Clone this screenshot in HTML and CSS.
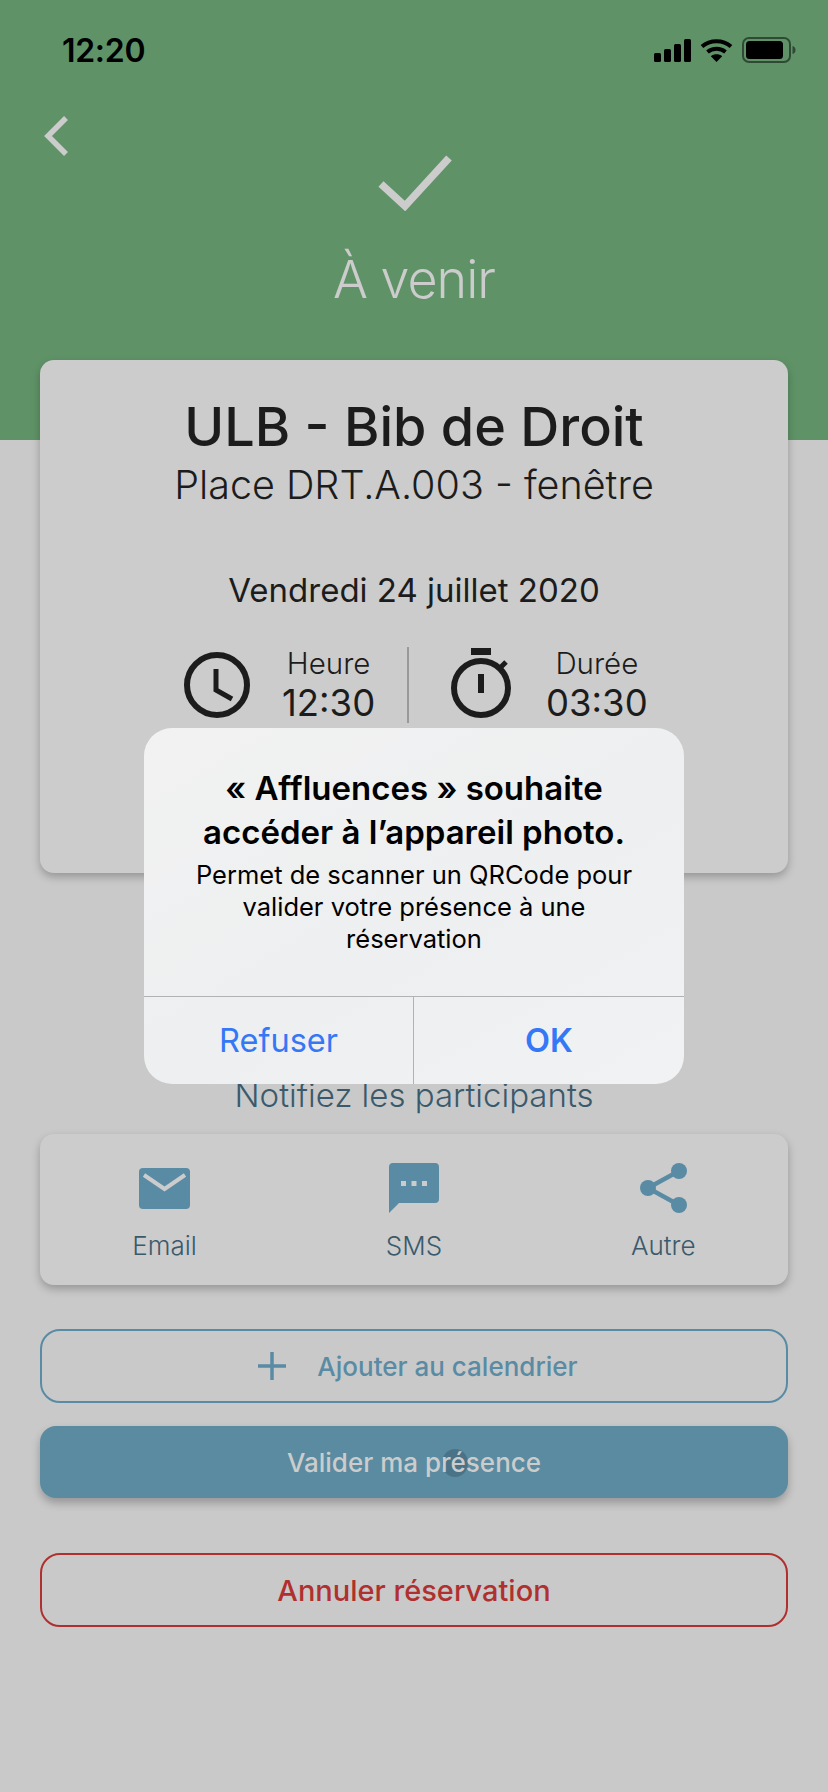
FILE: index.html
```html
<!DOCTYPE html>
<html lang="fr">
<head>
    <meta charset="utf-8">
    <title>Réservation</title>
    <link rel="stylesheet" href="styles.css">
</head>
<body>
<div class="page">
    <header class="hero">
        <div class="status-bar">
            <span class="time">12:20</span>
            <div class="status-icons">
                <svg class="signal" width="37" height="23" viewBox="0 0 37 23"><rect x="0" y="14" width="7" height="9" rx="1.5"/><rect x="10" y="10" width="7" height="13" rx="1.5"/><rect x="20" y="5" width="7" height="18" rx="1.5"/><rect x="30" y="0" width="7" height="23" rx="1.5"/></svg>
                <svg class="wifi" width="33" height="24" viewBox="0 0 33 24"><path d="M2 8.5C10 1.5 23 1.5 31 8.5M7.5 14C12.5 9.7 20.5 9.7 25.5 14" fill="none" stroke="#000" stroke-width="4"/><path d="M16.5 24L10.8 18.2C14 15.6 19 15.6 22.2 18.2Z"/></svg>
                <svg class="battery" width="54" height="26" viewBox="0 0 54 26"><rect x="1" y="1" width="47" height="24" rx="6" fill="none" stroke="#2f4a34" stroke-width="2"/><rect x="4" y="4" width="37" height="18" rx="3.5"/><path d="M50.5 9C52.5 9.6 53.5 11 53.5 13S52.5 16.4 50.5 17Z" fill="#2f4a34"/></svg>
            </div>
        </div>
        <svg class="back" width="26" height="40" viewBox="0 0 26 40"><path d="M23 2L5 20L23 38" fill="none" stroke="#cccccc" stroke-width="5.5"/></svg>
        <svg class="check" width="74" height="56" viewBox="0 0 74 56"><path d="M3 29L27 51L71 3" fill="none" stroke="#cccccc" stroke-width="7.5"/></svg>
        <h1 class="hero-title">À venir</h1>
    </header>

    <main class="content">
        <section class="card booking">
            <h2 class="place">ULB - Bib de Droit</h2>
            <p class="seat">Place DRT.A.003 - fenêtre</p>
            <p class="date">Vendredi 24 juillet 2020</p>
            <div class="slots">
                <div class="slot slot-left">
                    <svg width="66" height="66" viewBox="0 0 66 66"><circle cx="33" cy="33" r="30" fill="none" stroke="#1c1c1c" stroke-width="6"/><path d="M32 17V38L48 47" fill="none" stroke="#1c1c1c" stroke-width="5"/></svg>
                    <div class="slot-text">
                        <span class="slot-label">Heure</span>
                        <span class="slot-value">12:30</span>
                    </div>
                </div>
                <div class="slot slot-right">
                    <svg width="60" height="70" viewBox="0 0 60 70"><rect x="20" y="0" width="20" height="7" fill="#1c1c1c"/><circle cx="30" cy="40" r="27" fill="none" stroke="#1c1c1c" stroke-width="6"/><path d="M49 20L55 14" fill="none" stroke="#1c1c1c" stroke-width="5"/><rect x="27" y="26" width="6" height="19" fill="#1c1c1c"/></svg>
                    <div class="slot-text">
                        <span class="slot-label">Durée</span>
                        <span class="slot-value">03:30</span>
                    </div>
                </div>
            </div>
        </section>

        <p class="notify-title">Notifiez les participants</p>
        <section class="card share">
            <div class="share-item">
                <div class="share-icon">
                    <svg width="51" height="41" viewBox="0 0 51 41"><rect width="51" height="41" rx="4" fill="#5a8ba4"/><path d="M5 7L25.5 21L46 7" fill="none" stroke="#cccccc" stroke-width="4"/></svg>
                </div>
                <span>Email</span>
            </div>
            <div class="share-item">
                <div class="share-icon">
                    <svg width="50" height="50" viewBox="0 0 50 50"><path d="M4 0H46A4 4 0 0 1 50 4V36A4 4 0 0 1 46 40H10L0 50V4A4 4 0 0 1 4 0Z" fill="#5a8ba4"/><rect x="12" y="18" width="5" height="5" fill="#cccccc"/><rect x="22.5" y="18" width="5" height="5" fill="#cccccc"/><rect x="33" y="18" width="5" height="5" fill="#cccccc"/></svg>
                </div>
                <span>SMS</span>
            </div>
            <div class="share-item">
                <div class="share-icon">
                    <svg width="47" height="50" viewBox="0 0 47 50"><path d="M39 8L8 25L39 42" fill="none" stroke="#5a8ba4" stroke-width="4.5"/><circle cx="39" cy="8" r="8" fill="#5a8ba4"/><circle cx="8" cy="25" r="8" fill="#5a8ba4"/><circle cx="39" cy="42" r="8" fill="#5a8ba4"/></svg>
                </div>
                <span>Autre</span>
            </div>
        </section>

        <button class="btn btn-outline">
            <svg width="28" height="28" viewBox="0 0 28 28"><path d="M14 0V28M0 14H28" stroke="#5a8ba4" stroke-width="3.5"/></svg>
            <span>Ajouter au calendrier</span>
        </button>
        <button class="btn btn-primary">
            <span class="spinner"></span>
            <span class="btn-label">Valider ma présence</span>
        </button>
        <button class="btn btn-danger">Annuler réservation</button>
    </main>

    <div class="alert">
        <div class="alert-body">
            <h3 class="alert-title">« Affluences » souhaite<br>accéder à l’appareil photo.</h3>
            <p class="alert-text">Permet de scanner un QRCode pour<br>valider votre présence à une<br>réservation</p>
        </div>
        <div class="alert-actions">
            <span class="alert-btn">Refuser</span>
            <span class="alert-btn alert-btn-bold">OK</span>
        </div>
    </div>
</div>
</body>
</html>
```
FILE: styles.css
```css
* {
    box-sizing: border-box;
}

body {
    margin: 0;
    font-family: Inter, "Noto Sans", sans-serif;
}

.page {
    position: relative;
    width: 828px;
    height: 1792px;
    overflow: hidden;
    background-color: #c9c9c9;
}

/* header */
.hero {
    height: 440px;
    padding-top: 30px;
    background-color: #5f9367;
    display: flex;
    flex-direction: column;
}

.status-bar {
    height: 40px;
    padding: 0 32px 0 62px;
    display: flex;
    justify-content: space-between;
    align-items: center;
}

.time {
    font-size: 32px;
    font-weight: 600;
    letter-spacing: -0.3px;
    color: #000;
}

.status-icons {
    display: flex;
    align-items: center;
    gap: 9px;
}

.back {
    margin: 46px 0 0 43px;
}

.check {
    margin: -1px 0 0 378px;
}

.hero-title {
    margin: 39px 0 0;
    text-align: center;
    font-size: 52px;
    line-height: 60px;
    font-weight: 300;
    letter-spacing: -1px;
    color: #cccccc;
}

/* cards */
.content {
    margin-top: -80px;
    padding: 0 40px;
    display: flex;
    flex-direction: column;
    position: relative;
}

.card {
    background-color: #cccccc;
    border-radius: 14px;
    box-shadow: 0 4px 8px rgba(0, 0, 0, 0.25);
}

.booking {
    height: 513px;
    padding-top: 37px;
    text-align: center;
    color: #1c1c1c;
}

.place {
    margin: 0;
    font-size: 54px;
    line-height: 60px;
    font-weight: 500;
}

.seat {
    margin: 3px 0 0;
    font-size: 39.5px;
    line-height: 50px;
    font-weight: 300;
}

.date {
    margin: 60px 0 0;
    font-size: 33px;
    line-height: 40px;
    font-weight: 400;
}

.slots {
    margin-top: 37px;
    display: flex;
}

.slot {
    height: 76px;
    display: flex;
    align-items: flex-end;
}

.slot-left {
    width: 369px;
    padding-left: 144px;
    gap: 32px;
    border-right: 2px solid #999999;
}

.slot-right {
    padding-left: 42px;
    gap: 35px;
}

.slot svg {
    margin-bottom: 5px;
}

.slot-text {
    display: flex;
    flex-direction: column;
    align-items: center;
    margin-bottom: -2px;
}

.slot-label {
    font-size: 29.5px;
    line-height: 36px;
    font-weight: 300;
}

.slot-value {
    font-size: 36.5px;
    line-height: 44px;
}

.notify-title {
    margin: 201px 0 0;
    height: 42px;
    text-align: center;
    font-size: 33px;
    line-height: 42px;
    font-weight: 300;
    color: #3a5a6c;
}

.share {
    margin-top: 18px;
    height: 151px;
    padding: 29px 0 0;
    display: grid;
    grid-template-columns: repeat(3, 1fr);
    border-radius: 14px;
}

.share-item {
    display: flex;
    flex-direction: column;
    align-items: center;
    font-size: 26px;
    line-height: 30px;
    font-weight: 300;
    color: #3a5a6c;
}

.share-icon {
    height: 50px;
    margin-bottom: 18px;
    display: flex;
    align-items: center;
}

/* buttons */
.btn {
    position: relative;
    width: 100%;
    height: 74px;
    border-radius: 20px;
    font-family: inherit;
    font-size: 26px;
    font-weight: 500;
    display: flex;
    align-items: center;
    justify-content: center;
    padding: 0;
}

.btn-outline {
    margin-top: 44px;
    padding-left: 8px;
    gap: 31px;
    background: none;
    border: 2px solid #5a8ba4;
    color: #5a8ba4;
}

.btn-primary {
    margin-top: 23px;
    height: 72px;
    border: none;
    border-radius: 16px;
    background-color: #5a8ba0;
    color: #cccccc;
    box-shadow: 0 5px 8px rgba(0, 0, 0, 0.25);
}

.btn-label {
    position: relative;
}

.spinner {
    position: absolute;
    left: 402px;
    top: 23px;
    width: 26px;
    height: 28px;
    border-radius: 50%;
    background-color: rgba(50, 80, 100, 0.4);
}

.btn-danger {
    margin-top: 55px;
    background: none;
    border: 2px solid #b03030;
    color: #b03030;
    font-size: 29px;
}

/* alert */
.alert {
    position: absolute;
    left: 144px;
    top: 728px;
    width: 540px;
    height: 356px;
    border-radius: 28px;
    overflow: hidden;
    background: linear-gradient(150deg, #f2f2f2, #edeff0 55%, #f1f2f3);
    display: flex;
    flex-direction: column;
    color: #000;
}

.alert-body {
    height: 268px;
    padding-top: 38px;
    text-align: center;
}

.alert-title {
    margin: 0;
    font-size: 33px;
    line-height: 44px;
    font-weight: 600;
}

.alert-text {
    margin: 5px 0 0;
    font-size: 25.5px;
    line-height: 32px;
}

.alert-actions {
    flex: 1;
    display: grid;
    grid-template-columns: 1fr 1fr;
    border-top: 1px solid #b2b2b2;
}

.alert-btn {
    display: flex;
    align-items: center;
    justify-content: center;
    font-size: 32.5px;
    color: #3478f6;
}

.alert-btn:first-child {
    border-right: 1px solid #b2b2b2;
}

.alert-btn-bold {
    font-weight: 600;
}
```
